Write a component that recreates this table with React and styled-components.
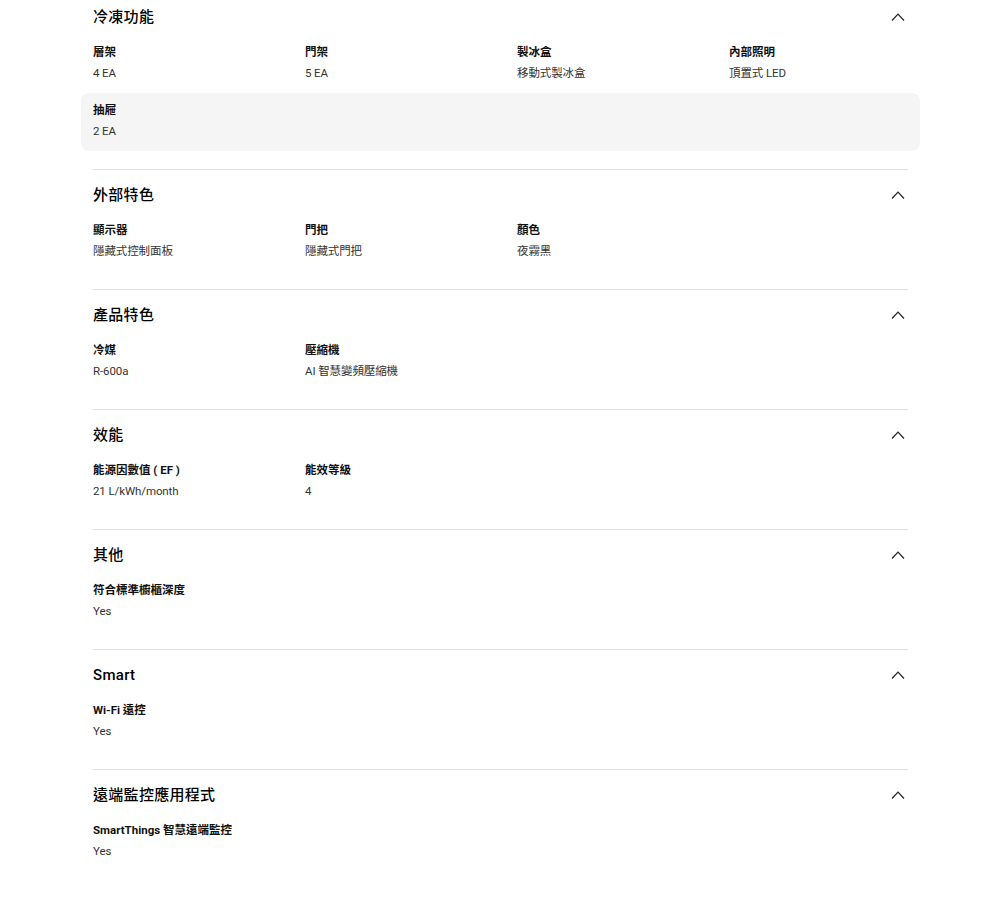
import styled, { createGlobalStyle } from 'styled-components';

const GlobalStyle = createGlobalStyle`
    html, body {
        margin: 0;
        padding: 0;
        background: #fff;
    }
    body {
        font-family: Roboto, "Noto Sans CJK TC", sans-serif;
        color: #000;
    }
`;

const specs = [
    {
        title: '冷凍功能',
        items: [
            { label: '層架', value: '4 EA' },
            { label: '門架', value: '5 EA' },
            { label: '製冰盒', value: '移動式製冰盒' },
            { label: '內部照明', value: '頂置式 LED' },
            { label: '抽屜', value: '2 EA', active: true },
        ],
    },
    {
        title: '外部特色',
        items: [
            { label: '顯示器', value: '隱藏式控制面板' },
            { label: '門把', value: '隱藏式門把' },
            { label: '顏色', value: '夜霧黑' },
        ],
    },
    {
        title: '產品特色',
        items: [
            { label: '冷媒', value: 'R-600a' },
            { label: '壓縮機', value: 'AI 智慧變頻壓縮機' },
        ],
    },
    {
        title: '效能',
        items: [
            { label: '能源因數值 ( EF )', value: '21 L/kWh/month' },
            { label: '能效等級', value: '4' },
        ],
    },
    {
        title: '其他',
        items: [{ label: '符合標準櫥櫃深度', value: 'Yes' }],
    },
    {
        title: 'Smart',
        items: [{ label: 'Wi-Fi 遠控', value: 'Yes' }],
    },
    {
        title: '遠端監控應用程式',
        items: [{ label: 'SmartThings 智慧遠端監控', value: 'Yes' }],
    },
];

function Caret() {
    return (
        <svg viewBox="0 0 14 8" width="14" height="8">
            <path
                d="M1 7.5L7 1.2l6 6.3"
                fill="none"
                stroke="#222"
                strokeWidth="1.2"
            />
        </svg>
    );
}

function App() {
    return (
        <>
            <GlobalStyle />
            <Page>
                {specs.map((section) => (
                    <Section key={section.title}>
                        <Header>
                            <Title>{section.title}</Title>
                            <Caret />
                        </Header>
                        <Grid>
                            {section.items.map((item) => (
                                <Item key={item.label} $active={item.active}>
                                    <Label>{item.label}</Label>
                                    <Value>{item.value}</Value>
                                </Item>
                            ))}
                        </Grid>
                    </Section>
                ))}
            </Page>
        </>
    );
}

export default App;

const Page = styled.div`
    width: 815px;
    margin-left: 93px;
`;

const Section = styled.section`
    border-top: 1px solid #e0e0e0;
    padding-bottom: 18px;
    &:first-child {
        border-top: none;
    }
    &:first-child > header {
        padding-top: 5px;
    }
`;

const Header = styled.header`
    display: flex;
    align-items: center;
    justify-content: space-between;
    padding: 13px 3px 6px 0;
    svg {
        display: block;
    }
`;

const Title = styled.h3`
    margin: 0;
    font-size: 15px;
    line-height: 24px;
    font-weight: 500;
    letter-spacing: 0.3px;
    color: #000;
`;

const Grid = styled.div`
    display: grid;
    grid-template-columns: repeat(4, 1fr);
    column-gap: 33px;
`;

const Item = styled.div`
    display: flex;
    flex-direction: column;
    gap: 3px;
    height: 58px;
    box-sizing: border-box;
    padding: 8px 0 0;
    ${({ $active }) =>
        $active &&
        `
        grid-column: 1 / -1;
        margin: 0 -12px;
        padding: 8px 12px 0;
        background: #f5f5f5;
        border-radius: 8px;
    `}
`;

const Label = styled.div`
    font-size: 11.5px;
    line-height: 18px;
    font-weight: 700;
    color: #111;
`;

const Value = styled.div`
    font-size: 11.5px;
    line-height: 18px;
    letter-spacing: -0.1px;
    color: #333;
`;
